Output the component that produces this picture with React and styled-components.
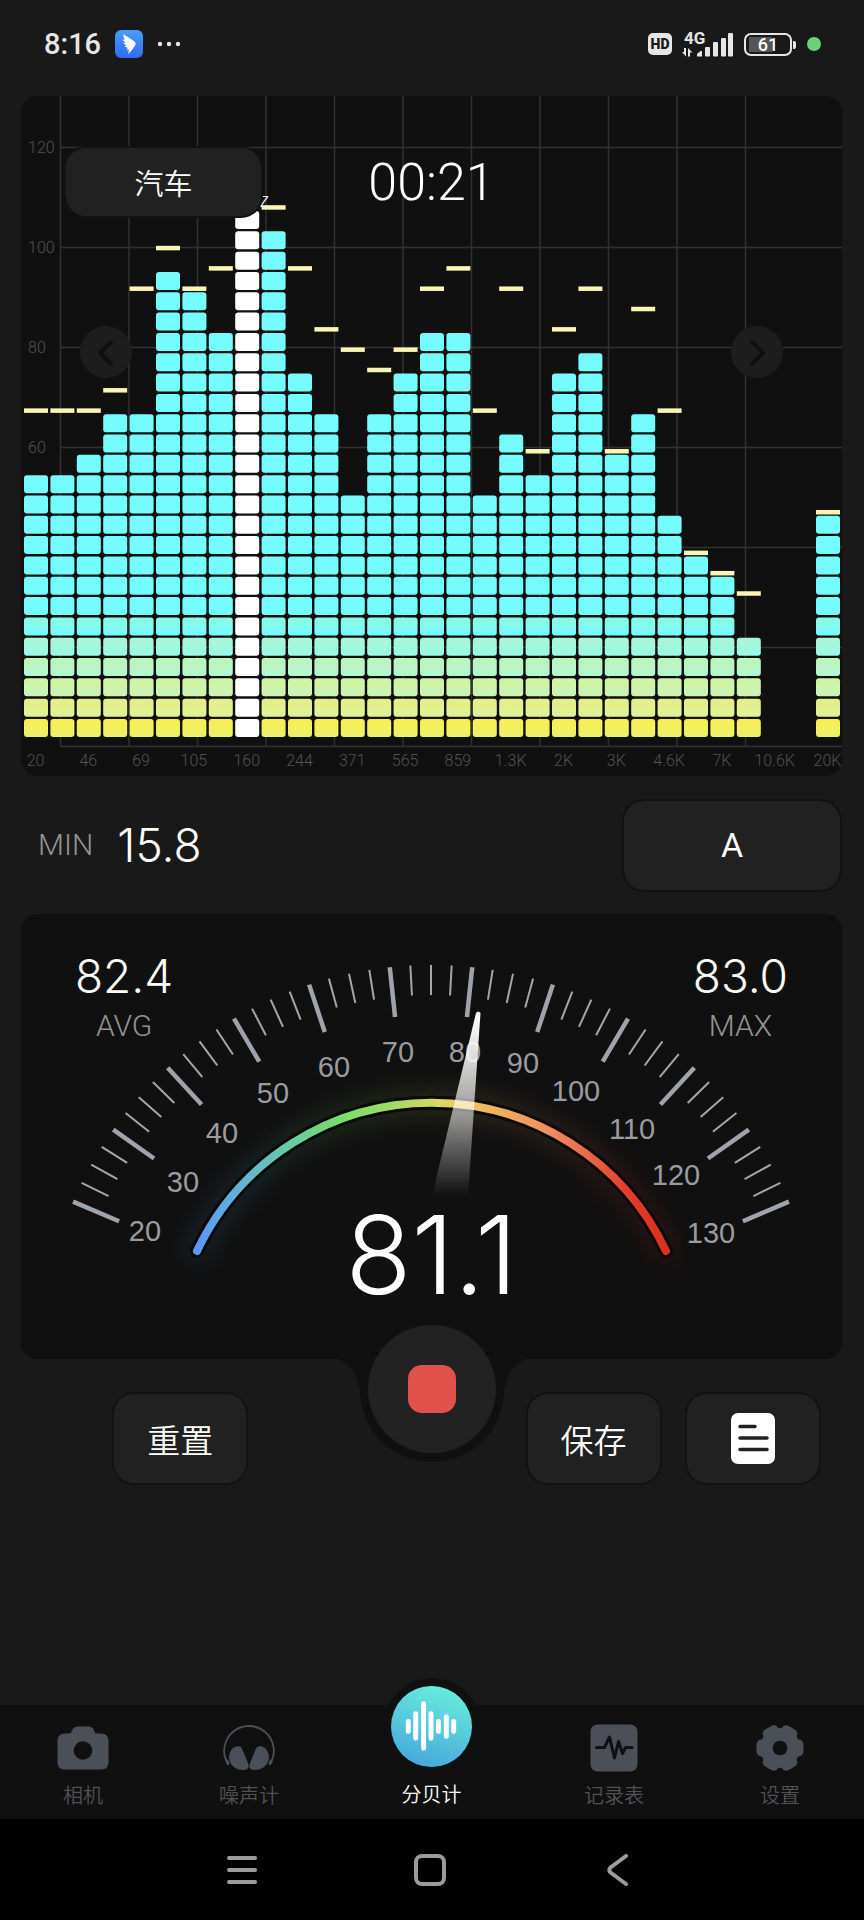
import React, { useState } from 'react';
import styled, { createGlobalStyle, css } from 'styled-components';

const GlobalStyle = createGlobalStyle`
    * { box-sizing: border-box; }
    body {
        margin: 0;
        background: #191919;
        color: #fff;
        font-family: Roboto, "Noto Sans CJK SC", sans-serif;
    }
    button { font: inherit; color: inherit; border: none; padding: 0; cursor: pointer; }
    svg { display: block; }
`

/* ---------- data ---------- */

// lit cells and held peak for each frequency band
const bands = [
    [13, 17], [13, 17], [14, 17], [16, 18], [16, 23], [23, 25], [22, 23], [20, 24],
    [26, 0], [25, 27], [18, 24], [16, 21], [12, 20], [16, 19], [18, 20], [20, 23],
    [20, 24], [12, 17], [15, 23], [13, 15], [18, 21], [19, 23], [14, 15], [16, 22],
    [11, 17], [9, 10], [8, 9], [5, 8], [0, 0], [0, 0], [11, 12],
];
const selectedBand = 8;
const freqLabels = ['20', '46', '69', '105', '160', '244', '371', '565', '859', '1.3K', '2K', '3K', '4.6K', '7K', '10.6K', '20K'];
const levelLabels = ['120', '100', '80', '60'];
const rowColors = [
    ['#f9f04e', '#ebf070'],
    ['#e5ee86', '#dff29a'],
    ['#d2f4a2', '#c8f3b8'],
    ['#c0f4b8', '#b0f7d0'],
    ['#acf5d4', '#98f9e6'],
    ['#8cfae2', '#75fcff'],
    ['#75fcff', '#75fcff'],
];

const dialLabels = [
    [20, 124, 317], [30, 162, 268], [40, 201, 219], [50, 252, 179], [60, 313, 153], [70, 377, 138],
    [80, 444, 138], [90, 502, 149], [100, 555, 177], [110, 611, 215], [120, 655, 261], [130, 690, 319],
];

/* ---------- status bar ---------- */

const StatusBar = () => (
    <Status>
        <StatusGroup>
            <Clock>8:16</Clock>
            <svg width="28" height="28" viewBox="0 0 28 28">
                <defs>
                    <linearGradient id="wingBg" x1="0" y1="0" x2="0" y2="1">
                        <stop offset="0" stopColor="#4a9cf8"/>
                        <stop offset="1" stopColor="#2f6cf6"/>
                    </linearGradient>
                </defs>
                <rect width="28" height="28" rx="6" fill="url(#wingBg)"/>
                <path d="M8 4 C12 7 17 9 20 12 C21.5 13.5 20.5 15 19 17 L17 20 L13 24 L14 20 L11.5 19.5 L13 18 L9.5 16.5 L11.5 15.8 L8 13 L10.5 13 L7.5 9.5 L9.5 10 Z" fill="#fff"/>
            </svg>
            <svg width="24" height="6" viewBox="0 0 24 6" fill="#e6e6e6">
                <circle cx="3" cy="3" r="2.2"/><circle cx="12" cy="3" r="2.2"/><circle cx="21" cy="3" r="2.2"/>
            </svg>
        </StatusGroup>
        <StatusGroup $right>
            <HdBadge>HD</HdBadge>
            <Signal>
                <span>4G</span>
                <svg width="52" height="25" viewBox="0 0 52 25" fill="#e6e6e6">
                    <path d="M0 20 L4 24.5 V16 H2 V20 Z M6 24.5 V16 L10.5 20.5 H8 V24.5 Z"/>
                    <path d="M15 24.5 v-2.5 l3.5 -3 h1.5 v5.5 z"/>
                    <rect x="23" y="15" width="5" height="9.5" rx="1"/>
                    <rect x="31" y="10" width="5" height="14.5" rx="1"/>
                    <rect x="39" y="6" width="5" height="18.5" rx="1"/>
                    <rect x="46" y="1" width="5" height="23.5" rx="1"/>
                </svg>
            </Signal>
            <Battery>61</Battery>
            <GreenDot/>
        </StatusGroup>
    </Status>
);

/* ---------- spectrum ---------- */

const Spectrum = () => (
    <svg width="100%" viewBox="0 0 821 680">
        <defs>
            {rowColors.map(([top, bottom], i) => (
                <linearGradient id={`row${i}`} key={i} x1="0" y1="0" x2="0" y2="1">
                    <stop offset="0" stopColor={top}/>
                    <stop offset="1" stopColor={bottom}/>
                </linearGradient>
            ))}
        </defs>
        <g stroke="#313131" strokeWidth="1.5">
            {[...Array(11)].map((_, i) => <path key={i} d={`M${39.5 + i * 68.5} 0 V650`}/>)}
            {[...Array(6)].map((_, i) => <path key={i} d={`M39 ${51.5 + i * 100} H821`}/>)}
            <path d="M39 650.5 H821"/>
        </g>
        <ChartLabels>
            {levelLabels.map((label, i) => <text key={label} x="7" y={57 + i * 100}>{label}</text>)}
            {freqLabels.map((label, i) => <text key={label} x={14.5 + i * 52.8} y="670" textAnchor="middle">{label}</text>)}
        </ChartLabels>
        {bands.map(([level, peak], n) => {
            const x = 3 + n * 26.4;
            return (
                <g key={n}>
                    {[...Array(level)].map((_, k) => (
                        <rect
                            key={k} x={x} y={623 - k * 20.32} width="24" height="18" rx="3"
                            fill={n === selectedBand ? '#fff' : `url(#row${Math.min(k, 6)})`}
                        />
                    ))}
                    {peak > 0 && <rect x={x} y={637.5 - (peak - 1) * 20.32} width="24" height="4.5" fill="#faf5b4"/>}
                </g>
            );
        })}
        <PeakTag x="248" y="111" textAnchor="end">160Hz</PeakTag>
    </svg>
);

/* ---------- gauge ---------- */

const CX = 410;
const CY = 440;
const point = (r, deg) => {
    const a = deg * Math.PI / 180;
    return `${CX - r * Math.cos(a)} ${CY - r * Math.sin(a)}`;
};

const Dial = () => (
    <svg width="100%" viewBox="0 0 821 445">
        <defs>
            <linearGradient id="scale" gradientUnits="userSpaceOnUse" x1="176" y1="0" x2="645" y2="0">
                <stop offset="0" stopColor="#5a98fb"/>
                <stop offset="0.08" stopColor="#62b0dc"/>
                <stop offset="0.2" stopColor="#68cca0"/>
                <stop offset="0.32" stopColor="#7cde68"/>
                <stop offset="0.42" stopColor="#a4dc66"/>
                <stop offset="0.52" stopColor="#dcd860"/>
                <stop offset="0.62" stopColor="#f0b85c"/>
                <stop offset="0.76" stopColor="#f08a60"/>
                <stop offset="0.86" stopColor="#e65c42"/>
                <stop offset="0.92" stopColor="#e33c2c"/>
                <stop offset="1" stopColor="#da3020"/>
            </linearGradient>
            <linearGradient id="needle" x1="0" y1="0" x2="0" y2="1">
                <stop offset="0" stopColor="#fff"/>
                <stop offset="0.25" stopColor="#fff" stopOpacity="0.85"/>
                <stop offset="0.6" stopColor="#fff" stopOpacity="0.5"/>
                <stop offset="1" stopColor="#fff" stopOpacity="0"/>
            </linearGradient>
            <filter id="glow" x="-20%" y="-30%" width="140%" height="160%">
                <feGaussianBlur stdDeviation="13"/>
            </filter>
        </defs>
        {[...Array(45)].map((_, i) => {
            const major = i % 4 === 0;
            const deg = 23.05 + i * 133.9 / 44;
            return (
                <path
                    key={i} d={`M${point(389, deg)} L${point(major ? 339 : 359, deg)}`}
                    stroke={major ? '#9fa3ac' : '#a6a6a6'} strokeWidth={major ? 4.5 : 2}
                />
            );
        })}
        <DialLabels>
            {dialLabels.map(([label, x, y]) => <text key={label} x={x} y={y + 10}>{label}</text>)}
        </DialLabels>
        <g fill="none" strokeLinecap="round">
            <path d="M176 337 A259.5 259.5 0 0 1 645 337" stroke="url(#scale)" strokeWidth="20" opacity="0.16" filter="url(#glow)"/>
            <path d="M176 337 A259.5 259.5 0 0 1 645 337" stroke="#0a0a08" strokeWidth="14"/>
            <path d="M176 337 A259.5 259.5 0 0 1 645 337" stroke="url(#scale)" strokeWidth="8"/>
        </g>
        <path d="M455 99 Q457 96 459.5 99 L447 282 H411 Z" fill="url(#needle)"/>
    </svg>
);

/* ---------- tabs ---------- */

const CameraIcon = () => (
    <svg width="52" height="44" viewBox="0 0 52 44">
        <path fillRule="evenodd" fill="currentColor" d="M8 7.5 H12 C14 7.5 14.5 6 15 4.5 C16 1.5 18 .5 21 .5 H31 C34 .5 36 1.5 37 4.5 C37.5 6 38 7.5 40 7.5 H44 Q51.5 7.5 51.5 15 V36 Q51.5 43.5 44 43.5 H8 Q.5 43.5 .5 36 V15 Q.5 7.5 8 7.5 Z M26 15.2 A9.3 9.3 0 1 0 26 33.8 A9.3 9.3 0 1 0 26 15.2 Z"/>
    </svg>
);

const HeadphonesIcon = () => (
    <svg width="52" height="46" viewBox="0 0 52 46">
        <path d="M5 39 A24.8 24.8 0 1 1 47 39" fill="none" stroke="currentColor" strokeWidth="1.8"/>
        <path d="M5 38.5 L4 36 M47 38.5 L48 36" stroke="currentColor" strokeWidth="3" strokeLinecap="round"/>
        <path d="M17 21.5 C18.5 22.5 19 23.5 20 26 L25 38 C26.5 42 25.5 44.5 21.5 45 C14 45.5 6.5 41 6 32.5 C6 26 11 19.5 17 21.5 Z" fill="currentColor"/>
        <path d="M35 21.5 C33.5 22.5 33 23.5 32 26 L27 38 C25.5 42 26.5 44.5 30.5 45 C38 45.5 45.5 41 46 32.5 C46 26 41 19.5 35 21.5 Z" fill="currentColor"/>
    </svg>
);

const RecordIcon = () => (
    <svg width="48" height="48" viewBox="0 0 48 48">
        <rect x=".5" y=".5" width="47" height="47" rx="7" fill="currentColor"/>
        <path d="M6.5 23.5 H14.5 L19.5 13 L24.5 34 L28.5 17.5 L32.5 29.5 L35.5 23.5 H42" fill="none" stroke="#101010" strokeWidth="3" strokeLinecap="round" strokeLinejoin="round"/>
    </svg>
);

const GearIcon = () => (
    <svg width="48" height="46" viewBox="0 0 48 46">
        <g fill="currentColor">
            <circle cx="24" cy="23" r="20"/>
            {[30, 90, 150, 210, 270, 330].map(deg => (
                <rect key={deg} x="15.5" y="-.5" width="17" height="18" rx="5" transform={`rotate(${deg} 24 23)`}/>
            ))}
        </g>
        <circle cx="24" cy="23" r="7.3" fill="#101010"/>
    </svg>
);

const WaveIcon = () => (
    <svg width="81" height="81" viewBox="0 0 82 82">
        <defs>
            <linearGradient id="wave" x1="0.65" y1="0" x2="0.35" y2="1">
                <stop offset="0" stopColor="#68ecdc"/>
                <stop offset="1" stopColor="#46a8dc"/>
            </linearGradient>
        </defs>
        <circle cx="41" cy="41" r="41" fill="url(#wave)"/>
        <path d="M17.5 36 V46 M25 28 V53 M33 18 V63 M40.5 28 V53 M48 36 V46 M56 31 V51 M63.5 36 V46" stroke="#fff" strokeWidth="5" strokeLinecap="round"/>
    </svg>
);

const tabs = [
    { label: '相机', Icon: CameraIcon },
    { label: '噪声计', Icon: HeadphonesIcon },
    { label: '分贝计', Icon: WaveIcon, center: true },
    { label: '记录表', Icon: RecordIcon },
    { label: '设置', Icon: GearIcon },
];

const App = () => {

    const [tab, setTab] = useState('分贝计');

    return (
        <Page>
            <GlobalStyle/>
            <StatusBar/>

            <Main>
                <Card>
                    <Spectrum/>
                    <SourceButton>汽车</SourceButton>
                    <Timer>00:21</Timer>
                    <ArrowButton $side="left" aria-label="previous">
                        <svg width="52" height="52" viewBox="0 0 52 52"><path d="M31 16 L20 27 L31 38"/></svg>
                    </ArrowButton>
                    <ArrowButton $side="right" aria-label="next">
                        <svg width="52" height="52" viewBox="0 0 52 52"><path d="M21 16 L32 27 L21 38"/></svg>
                    </ArrowButton>
                </Card>

                <MinRow>
                    <Caption>MIN</Caption>
                    <Value>15.8</Value>
                    <WeightButton>A</WeightButton>
                </MinRow>

                <GaugeCard>
                    <Dial/>
                    <Stat $side="start"><Value>82.4</Value><Caption>AVG</Caption></Stat>
                    <Stat $side="end"><Value>83.0</Value><Caption>MAX</Caption></Stat>
                    <Readout>81.1</Readout>
                </GaugeCard>

                <Controls>
                    <Side $align="center">
                        <ActionButton>重置</ActionButton>
                    </Side>
                    <RecordSlot>
                        <Dip width="208" height="106" viewBox="0 0 208 106">
                            <path d="M0 0 C18 0 28 12 32 32 A72 72 0 0 0 176 32 C180 12 190 0 208 0 Z" fill="#101010"/>
                        </Dip>
                        <RecordButton aria-label="stop"><i/></RecordButton>
                    </RecordSlot>
                    <Side $align="flex-start">
                        <ActionButton>保存</ActionButton>
                        <ActionButton aria-label="report">
                            <svg width="44" height="52" viewBox="0 0 44 52">
                                <rect width="44" height="51" rx="7" fill="#fff"/>
                                <path d="M9 13.5 H24 M9 25 H36 M9 36.5 H36" stroke="#212121" strokeWidth="3.5" strokeLinecap="round"/>
                            </svg>
                        </ActionButton>
                    </Side>
                </Controls>
            </Main>

            <TabBar>
                {tabs.map(({ label, Icon, center }) => (
                    <Tab key={label} $center={center} $active={tab === label} onClick={() => setTab(label)}>
                        <TabIcon $center={center}><Icon/></TabIcon>
                        <span>{label}</span>
                    </Tab>
                ))}
            </TabBar>

            <SystemBar>
                <SystemButton aria-label="recents">
                    <svg width="30" height="30" viewBox="0 0 30 30"><path d="M2 3 H28 M2 15 H28 M2 27 H28"/></svg>
                </SystemButton>
                <SystemButton aria-label="home">
                    <svg width="32" height="32" viewBox="0 0 32 32"><rect x="2" y="2" width="28" height="28" rx="6"/></svg>
                </SystemButton>
                <SystemButton aria-label="back">
                    <svg width="30" height="32" viewBox="0 0 30 32"><path d="M23 2 L7.5 13.5 Q5 16 7.5 18.5 L23 30"/></svg>
                </SystemButton>
            </SystemBar>
        </Page>
    );
};

export default App;

/* ---------- styles ---------- */

const Page = styled.div`
    display: flex;
    flex-direction: column;
    min-height: 100vh;
`

const Status = styled.header`
    display: flex;
    justify-content: space-between;
    align-items: center;
    height: 96px;
    padding: 0 43px 8px 44px;
    color: #e6e6e6;
`

const StatusGroup = styled.div`
    display: flex;
    align-items: center;
    gap: ${({$right}) => $right ? '10px' : '14px'};
`

const Clock = styled.span`
    font-size: 29px;
    font-weight: 500;
    line-height: 30px;
`

const HdBadge = styled.span`
    width: 24px;
    border-radius: 5px;
    background: #e6e6e6;
    color: #191919;
    font-size: 14px;
    font-weight: 900;
    line-height: 22px;
    text-align: center;
`

const Signal = styled.span`
    position: relative;
    span {
        position: absolute;
        top: -2px;
        left: 2px;
        font-size: 17px;
        font-weight: 700;
        line-height: 16px;
    }
`

const Battery = styled.span`
    position: relative;
    width: 48px;
    height: 23px;
    margin-right: 2px;
    border: 2px solid #e6e6e6;
    border-radius: 7px;
    background: linear-gradient(90deg, #555 60%, transparent 60%) 3px 2px / 38px 15px no-repeat;
    color: #fff;
    font-size: 18px;
    font-weight: 500;
    line-height: 19px;
    text-align: center;
    &::after {
        content: '';
        position: absolute;
        top: 6px;
        right: -6px;
        width: 3px;
        height: 8px;
        border-radius: 0 2px 2px 0;
        background: #e6e6e6;
    }
`

const GreenDot = styled.i`
    width: 14px;
    height: 14px;
    margin-left: 3px;
    border-radius: 50%;
    background: #6dd174;
`

const Main = styled.main`
    flex: 1;
    padding: 0 22px 0 21px;
`

const Card = styled.section`
    position: relative;
    overflow: hidden;
    border-radius: 16px;
    background: #101010;
`

const ChartLabels = styled.g`
    fill: #525254;
    font-size: 16px;
    font-weight: 300;
`

const DialLabels = styled.g`
    fill: #9a9ca2;
    font-family: "Liberation Sans", sans-serif;
    font-size: 29px;
    text-anchor: middle;
`

const PeakTag = styled.text`
    fill: #fff;
    font-size: 20px;
    font-weight: 300;
`

const raised = css`
    background: #212121;
    box-shadow: 0 0 0 2px #121212;
    border-radius: 20px;
`

const SourceButton = styled.button`
    ${raised}
    position: absolute;
    top: 52px;
    left: 45px;
    width: 195px;
    height: 68px;
    font-size: 29px;
    font-weight: 350;
`

const Timer = styled.time`
    position: absolute;
    top: 57px;
    left: 0;
    width: 100%;
    font-size: 52px;
    font-weight: 350;
    line-height: 60px;
    text-align: center;
    pointer-events: none;
`

const ArrowButton = styled.button`
    position: absolute;
    top: 230px;
    ${({$side}) => $side}: 59px;
    border-radius: 50%;
    background: #1d1d1d;
    path {
        fill: none;
        stroke: #101010;
        stroke-width: 4;
        stroke-linecap: round;
        stroke-linejoin: round;
    }
`

const MinRow = styled.section`
    display: flex;
    align-items: center;
    gap: 24px;
    height: 138px;
    padding: 0 2px 0 17px;
`

const Caption = styled.span`
    color: #949494;
    font-size: 30px;
    font-weight: 350;
    line-height: 36px;
`

const Value = styled.span`
    font-family: Inter, Roboto, sans-serif;
    font-size: 46px;
    font-weight: 350;
    line-height: 56px;
`

const WeightButton = styled.button`
    ${raised}
    width: 216px;
    height: 89px;
    margin-left: auto;
    font-size: 34px;
`

const GaugeCard = styled(Card)`
    display: grid;
    > * { grid-area: 1 / 1; }
`

const Stat = styled.div`
    display: flex;
    flex-direction: column;
    gap: 4px;
    align-items: center;
    align-self: start;
    justify-self: ${({$side}) => $side};
    padding: 34px 54px 0;
`

const Readout = styled.output`
    align-self: end;
    justify-self: center;
    margin-bottom: 64px;
    font-family: Inter, Roboto, sans-serif;
    font-size: 108px;
    font-weight: 350;
    line-height: 80px;
`

const Controls = styled.section`
    display: grid;
    grid-template-columns: 1fr 144px 1fr;
`

const Side = styled.div`
    display: flex;
    justify-content: ${({$align}) => $align};
    gap: 27px;
    padding: 35px 20px 0 ${({$align}) => $align === 'center' ? '0' : '24px'};
`

const ActionButton = styled.button`
    ${raised}
    display: flex;
    align-items: center;
    justify-content: center;
    width: 132px;
    height: 89px;
    font-size: 33px;
    font-weight: 350;
`

const RecordSlot = styled.div`
    position: relative;
    display: flex;
    justify-content: center;
    height: 104px;
`

const Dip = styled.svg`
    position: absolute;
    top: -1px;
    left: -32px;
`

const RecordButton = styled.button`
    position: relative;
    display: flex;
    align-items: center;
    justify-content: center;
    width: 128px;
    height: 128px;
    margin-top: -34px;
    flex: none;
    border-radius: 50%;
    background: #222;
    i {
        width: 48px;
        height: 48px;
        border-radius: 14px;
        background: #e15049;
    }
`

const TabBar = styled.nav`
    display: flex;
    height: 114px;
    padding-right: 1px;
    background: #101010;
`

const Tab = styled.button`
    display: flex;
    flex-direction: column;
    align-items: center;
    flex: ${({$center}) => $center ? 6 : 5};
    background: none;
    color: #4b4f57;
    font-size: 20px;
    font-weight: 350;
    line-height: 24px;
    span {
        color: ${({$active}) => $active ? '#fff' : '#505156'};
    }
`

const TabIcon = styled.div`
    display: flex;
    align-items: center;
    justify-content: center;
    height: 46px;
    margin: 20px 0 13px;
    ${({$center}) => $center && css`
        height: 96px;
        width: 96px;
        margin: -27px 0 9px;
        border-radius: 50%;
        background: #101010;
    `}
`

const SystemBar = styled.footer`
    display: flex;
    align-items: center;
    justify-content: center;
    gap: 128px;
    height: 101px;
    padding-right: 4px;
    background: #000;
`

const SystemButton = styled.button`
    display: flex;
    justify-content: center;
    width: 60px;
    background: none;
    svg {
        fill: none;
        stroke: #9c9c9c;
        stroke-width: 4;
        stroke-linecap: round;
        stroke-linejoin: round;
    }
`
